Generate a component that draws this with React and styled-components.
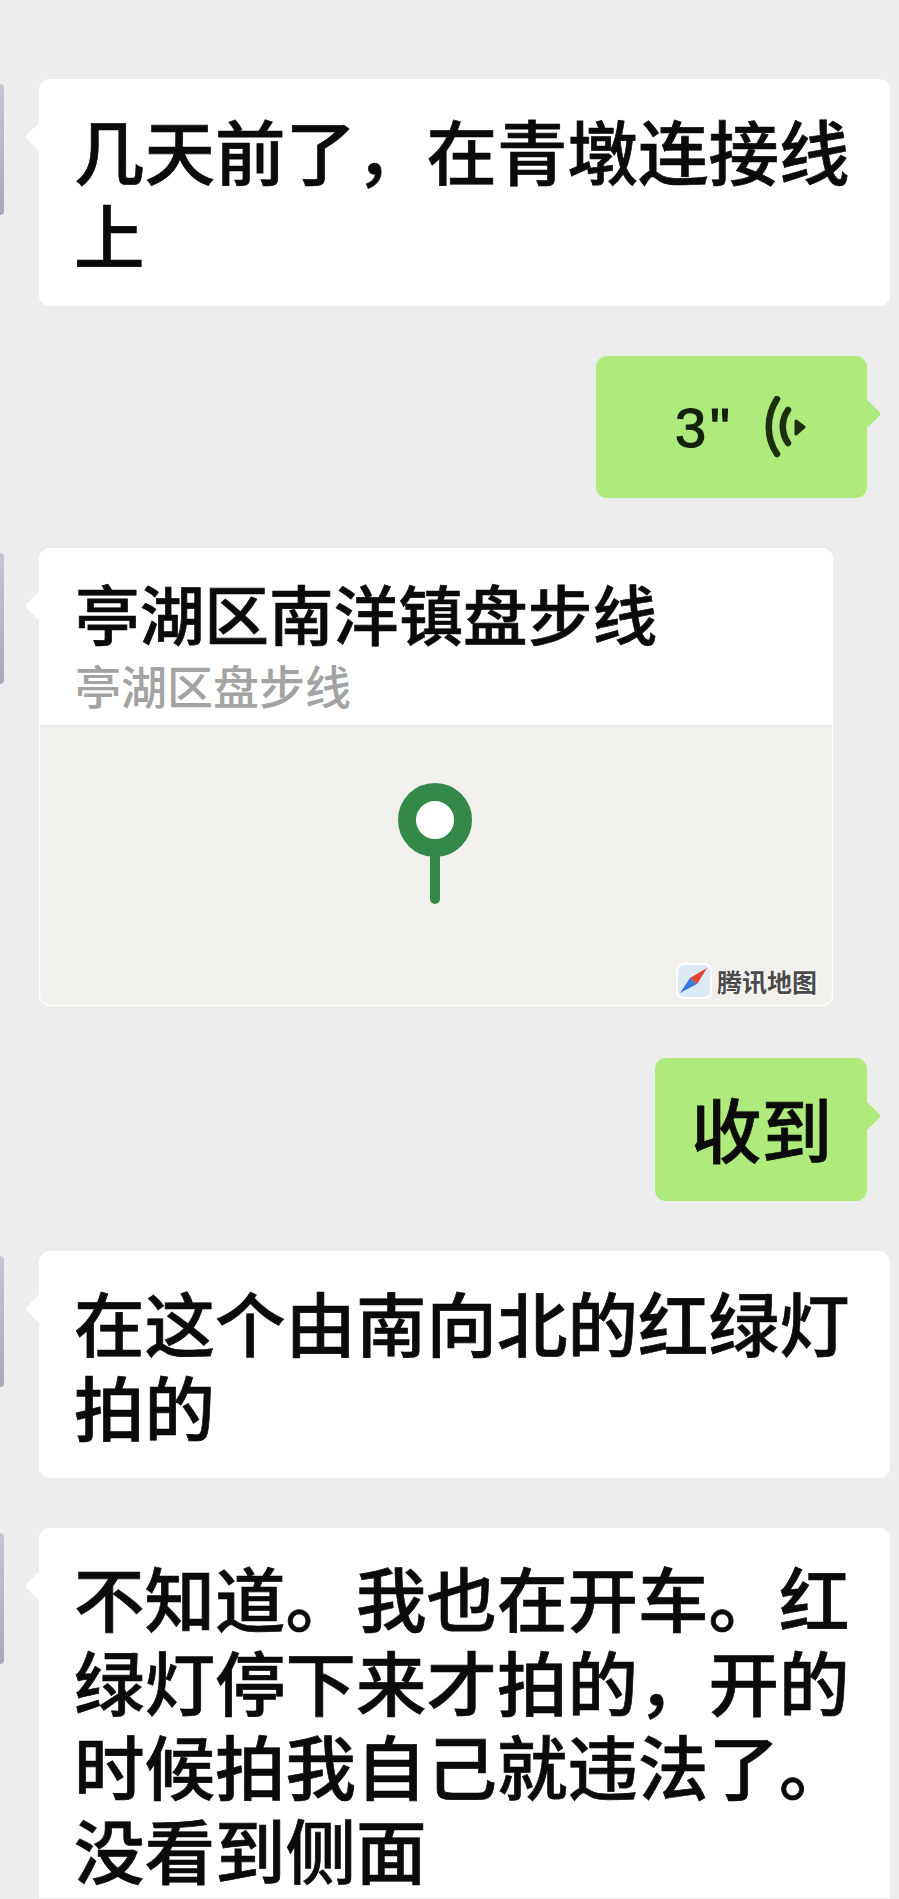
import React from "react";
import styled, { createGlobalStyle } from "styled-components";

const Global = createGlobalStyle`
  html, body { margin: 0; padding: 0; background: #ededed; }
  body { font-family: "Noto Sans CJK SC", "Liberation Sans", sans-serif; color: #0b0b0b; }
`;

const Page = styled.div`
  width: 899px;
  height: 1899px;
  overflow: hidden;
  box-sizing: border-box;
  padding-top: 79px;
  background: #ededed;
  display: flex;
  flex-direction: column;
  gap: 50px;
`;

const Row = styled.div`
  display: flex;
  align-items: flex-start;
  justify-content: ${(p) => (p.$mine ? "flex-end" : "flex-start")};
  padding: ${(p) => (p.$mine ? "0 32px 0 0" : "0")};
  margin-bottom: ${(p) => p.$after || 0}px;
`;

const Avatar = styled.div`
  width: 4px;
  height: 131px;
  margin: 5px 35px 0 0;
  flex: none;
  border-radius: 0 7px 7px 0;
  background: linear-gradient(180deg, #c6c4d2 0%, #aaa8bc 100%);
`;

const Bubble = styled.div`
  position: relative;
  box-sizing: border-box;
  width: ${(p) => p.$w}px;
  height: ${(p) => p.$h}px;
  border-radius: ${(p) => (p.$open ? "11px 11px 0 0" : "11px")};
  background: ${(p) => (p.$mine ? "#aeea7c" : "#ffffff")};
  &::before {
    content: "";
    position: absolute;
    top: 48px;
    width: 20px;
    height: 20px;
    background: inherit;
    ${(p) => (p.$mine ? "right: -10px;" : "left: -10px;")}
    transform: rotate(45deg);
    border-radius: 2px;
  }
`;

const Text = styled.div`
  position: relative;
  font-size: 70.5px;
  line-height: 84px;
  font-weight: 500;
  -webkit-text-stroke: 0.7px #0b0b0b;
  padding: ${(p) => p.$pad || "28px 0 0 35px"};
  white-space: pre;
`;

const VoiceBody = styled.div`
  display: flex;
  align-items: center;
  justify-content: flex-end;
  height: 100%;
  padding-right: 58px;
  gap: 29px;
`;

const Seconds = styled.span`
  font-family: "Liberation Sans", sans-serif;
  font-size: 56px;
  line-height: 60px;
  letter-spacing: 4px;
  margin-top: 2px;
  color: #12200c;
  -webkit-text-stroke: 1.2px #12200c;
`;

const LocationBubble = styled(Bubble)`
  display: flex;
  flex-direction: column;
`;

const LocTitle = styled.div`
  position: relative;
  font-size: 64.7px;
  line-height: 76px;
  font-weight: 500;
  -webkit-text-stroke: 0.7px #0a0a0a;
  padding: 26px 0 0 36px;
  color: #0a0a0a;
`;

const LocSub = styled.div`
  font-size: 46px;
  line-height: 60px;
  font-weight: 500;
  color: #a3a3a3;
  padding: 4px 0 0 36px;
  margin-bottom: 11px;
`;

const MapArea = styled.div`
  position: relative;
  flex: 1;
  display: flex;
  justify-content: center;
  margin: 0 1px 1px;
  background: #f1f0ec;
  border-top: 1px solid #e2e2e0;
  border-radius: 0 0 10px 10px;
`;

const Pin = styled.svg`
  margin: 57px 0 0 -2px;
  width: 74px;
  height: 122px;
`;

const Brand = styled.div`
  position: absolute;
  right: 15px;
  bottom: 6px;
  display: flex;
  align-items: center;
  gap: 5px;
  font-size: 25px;
  line-height: 36px;
  font-weight: 700;
  color: #4a4a4a;
  text-shadow: 0 0 3px #fff, 0 0 3px #fff;
`;

const Logo = styled.svg`
  width: 36px;
  height: 36px;
`;

const Voice = () => (
  <svg width="46" height="62" viewBox="0 0 46 62" fill="none" stroke="#1c300f" strokeLinecap="round">
    <path d="M14 3C3 20 3 42 14 58" strokeWidth="6.5" />
    <path d="M25 14C18 24 18 37 25 47" strokeWidth="6.5" />
    <path d="M33 25L41 31L33 38Z" fill="#1c300f" stroke="#1c300f" strokeWidth="3" strokeLinejoin="round" />
  </svg>
);

export default function App() {
  return (
    <Page>
      <Global />
      <Row>
        <Avatar />
        <Bubble $w={851} $h={227}>
          <Text>{"几天前了，在青墩连接线\n上"}</Text>
        </Bubble>
      </Row>
      <Row $mine>
        <Bubble $mine $w={271} $h={142}>
          <VoiceBody>
            <Seconds>3"</Seconds>
            <Voice />
          </VoiceBody>
        </Bubble>
      </Row>
      <Row $after={2}>
        <Avatar />
        <LocationBubble $w={794} $h={458}>
          <LocTitle>亭湖区南洋镇盘步线</LocTitle>
          <LocSub>亭湖区盘步线</LocSub>
          <MapArea>
            <Pin viewBox="0 0 74 122">
              <circle cx="37" cy="37" r="28" fill="#fff" stroke="#34894a" strokeWidth="18" />
              <path d="M37 70V116" stroke="#34894a" strokeWidth="10" strokeLinecap="round" />
            </Pin>
            <Brand>
              <Logo viewBox="0 0 36 36">
                <rect x="1" y="1" width="34" height="34" rx="7" fill="#dceaf5" stroke="#fff" strokeWidth="2" />
                <path d="M4 30L14 15L21 21Z" fill="#3a78dc" />
                <path d="M31 5L14 15L21 21Z" fill="#e0452f" />
              </Logo>
              腾讯地图
            </Brand>
          </MapArea>
        </LocationBubble>
      </Row>
      <Row $mine>
        <Bubble $mine $w={212} $h={143}>
          <Text $pad="27px 0 0 36px">收到</Text>
        </Bubble>
      </Row>
      <Row>
        <Avatar />
        <Bubble $w={851} $h={227}>
          <Text>{"在这个由南向北的红绿灯\n拍的"}</Text>
        </Bubble>
      </Row>
      <Row>
        <Avatar />
        <Bubble $open $w={851} $h={370}>
          <Text $pad="26px 0 0 35px">{"不知道。我也在开车。红\n绿灯停下来才拍的，开的\n时候拍我自己就违法了。\n没看到侧面"}</Text>
        </Bubble>
      </Row>
    </Page>
  );
}
